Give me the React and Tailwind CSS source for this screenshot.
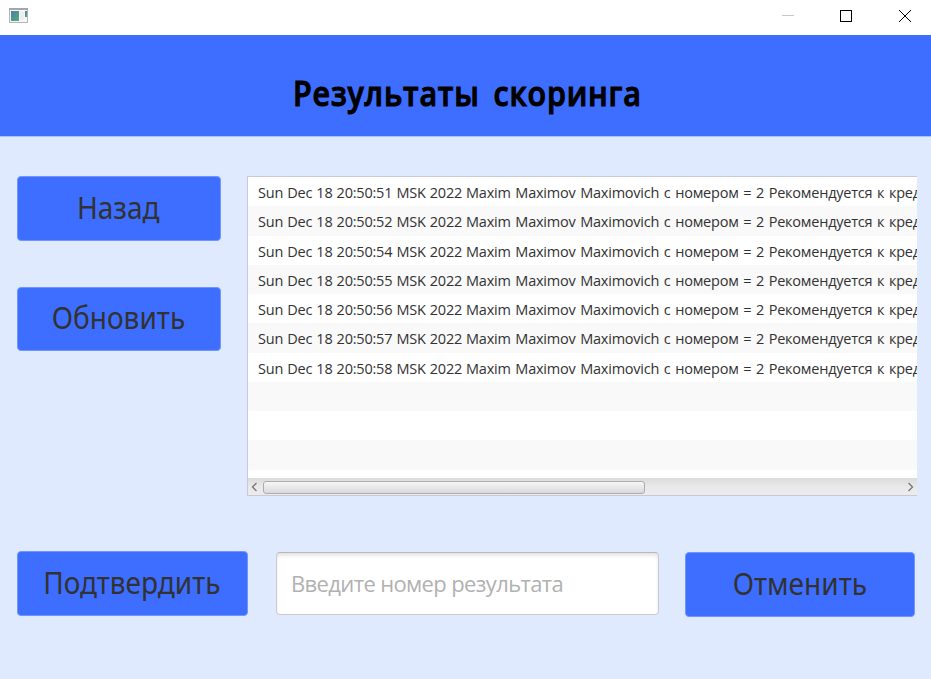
const TIMES = ['51', '52', '54', '55', '56', '57', '58'];
const STRIPES = Array.from({ length: 11 }, (_, i) => i);

function Button({ className, children }) {
  return (
    <button
      className={`flex items-center justify-center rounded-[4px] border border-[#7095ff] bg-[#3d6eff] pr-px pb-[2px] font-['Noto_Sans','Open_Sans',sans-serif] text-[30px] leading-none text-[#323232] ${className}`}
    >
      <span className="block scale-x-[0.935]">{children}</span>
    </button>
  );
}

function TitleBar() {
  return (
    <div className="flex h-[35px] items-start bg-white">
      <svg className="mt-[8px] ml-[9px]" width="20" height="16" viewBox="0 0 20 16">
        <defs>
          <linearGradient id="screen" x1="0" y1="0" x2="1" y2="1">
            <stop offset="0" stopColor="#4b7fa5" />
            <stop offset="1" stopColor="#55ad78" />
          </linearGradient>
        </defs>
        <rect x="0.5" y="0.5" width="18" height="14" fill="#f6f6f6" stroke="#b4b4b8" />
        <path d="M0 1h19" stroke="#a3a6ad" strokeWidth="2" />
        <rect x="2" y="3" width="8" height="10" fill="url(#screen)" />
        <path d="M12 4v8M14 4v8" stroke="#e6e6e6" />
        <rect x="16" y="3" width="2" height="6" fill="url(#screen)" />
      </svg>
      <div className="flex-1" />
      <svg className="mt-[9px] mr-[19px]" width="130" height="14" viewBox="0 0 130 14" fill="none" shapeRendering="crispEdges">
        <path d="M0 6.5h12" stroke="#c8c8c8" />
        <rect x="58.5" y="1.5" width="11" height="11" stroke="#000" />
        <path d="M117 1l12 12M129 1l-12 12" stroke="#000" shapeRendering="auto" />
      </svg>
    </div>
  );
}

function ResultList() {
  return (
    <div className="flex h-[320px] w-[670px] flex-col overflow-hidden border-t border-b border-l border-[#c6cad4] bg-white">
      <div className="h-[301px] overflow-hidden">
        {STRIPES.map((i) => (
          <div
            key={i}
            className={`h-[29.25px] overflow-hidden pt-px pl-[10px] font-['Open_Sans','Noto_Sans',sans-serif] text-[14.5px] leading-[29px] tracking-[-0.22px] [word-spacing:1.1px] whitespace-nowrap text-[#323232] ${i % 2 ? 'bg-[#f9f9f9]' : 'bg-white'}`}
          >
            {TIMES[i] && (
              <>
                <span className="inline-block w-[208px] [word-spacing:0.6px]">Sun Dec 18 20:50:{TIMES[i]} MSK 2022</span>
                <span>Maxim Maximov Maximovich с номером = 2 Рекомендуется к кредиту</span>
              </>
            )}
          </div>
        ))}
      </div>
      <div className="flex h-[17px] items-center bg-gradient-to-b from-[#dcdcdc] via-[#e9e9e9] to-[#ececec] pt-px">
        <svg className="ml-[3px]" width="7" height="10" viewBox="0 0 7 10" fill="none" stroke="#777" strokeWidth="1.3">
          <path d="M5.5 1L1.5 5l4 4" />
        </svg>
        <div className="ml-[5px] h-[13px] w-[382px] rounded-[3px] border border-[#adadad] bg-gradient-to-b from-[#f7f7f7] to-[#d9d9d9]" />
        <div className="flex-1" />
        <svg className="mr-[3px]" width="7" height="10" viewBox="0 0 7 10" fill="none" stroke="#777" strokeWidth="1.3">
          <path d="M1.5 1l4 4-4 4" />
        </svg>
      </div>
    </div>
  );
}

export default function App() {
  return (
    <div className="h-[679px] w-[931px] overflow-hidden bg-[#dfeaff]">
      <TitleBar />
      <header className="flex h-[102px] justify-center border-b border-[#a9c2ff] bg-[#3d6eff] pt-[33px] pl-[4px]">
        <h1 className="flex scale-x-[0.87] gap-[16px] font-['Comic_Sans_MS','Open_Sans',sans-serif] text-[35px] leading-[50px] font-semibold tracking-[0.9px] whitespace-nowrap text-black [-webkit-text-stroke:1.1px_black] [stroke-linejoin:round]">
          <span>Результаты</span> <span>скоринга</span>
        </h1>
      </header>
      <main className="pt-[39px] pl-[17px]">
        <div className="flex">
          <div className="flex w-[230px] flex-col gap-[46px]">
            <Button className="h-[65px] w-[204px]">Назад</Button>
            <Button className="h-[64px] w-[204px]">Обновить</Button>
          </div>
          <ResultList />
        </div>
        <div className="mt-[55px] flex items-start">
          <Button className="h-[65px] w-[231px]">Подтвердить</Button>
          <input
            className="mt-px ml-[28px] h-[63px] w-[383px] rounded-[4px] border border-[#cbcbcf] border-t-[#b8b8bc] bg-white px-[14px] pb-px font-['Open_Sans','Noto_Sans',sans-serif] text-[22px] tracking-[-0.63px] shadow-[inset_0_3px_4px_-1px_#dedede] outline-none placeholder:text-[#b1b1b1] placeholder:opacity-100"
            placeholder="Введите номер результата"
          />
          <Button className="mt-px ml-[26px] h-[65px] w-[230px]">Отменить</Button>
        </div>
      </main>
    </div>
  );
}
